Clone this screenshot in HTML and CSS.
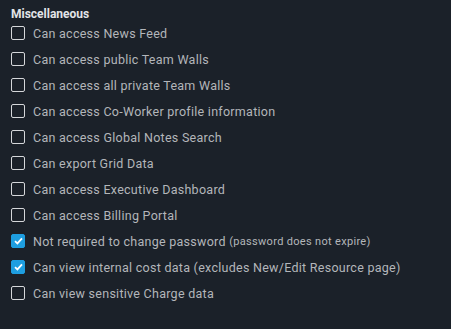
FILE: index.html
```html
<!DOCTYPE html>
<html>
<head>
	<meta charset="utf-8">
	<title>Permissions</title>
	<link rel="stylesheet" href="styles.css">
</head>
<body>
	<div class="section">
		<div class="title">Miscellaneous</div>
		<label class="row"><span class="box"></span>Can access News Feed</label>
		<label class="row"><span class="box"></span>Can access public Team Walls</label>
		<label class="row"><span class="box"></span>Can access all private Team Walls</label>
		<label class="row"><span class="box"></span>Can access Co-Worker profile information</label>
		<label class="row"><span class="box"></span>Can access Global Notes Search</label>
		<label class="row"><span class="box"></span>Can export Grid Data</label>
		<label class="row"><span class="box"></span>Can access Executive Dashboard</label>
		<label class="row"><span class="box"></span>Can access Billing Portal</label>
		<label class="row"><span class="box checked"><svg width="9" height="8" viewBox="0 0 9 8"><path d="M1 4.2 L3.4 6.4 L8 1.4" fill="none" stroke="#fff" stroke-width="1.8"/></svg></span>Not required to change password <span class="note">(password does not expire)</span></label>
		<label class="row"><span class="box checked"><svg width="9" height="8" viewBox="0 0 9 8"><path d="M1 4.2 L3.4 6.4 L8 1.4" fill="none" stroke="#fff" stroke-width="1.8"/></svg></span>Can view internal cost data (excludes New/Edit Resource page)</label>
		<label class="row"><span class="box"></span>Can view sensitive Charge data</label>
	</div>
</body>
</html>
```

FILE: styles.css
```css
html, body{
	margin: 0;
	background-color: #1b2129;
}
body{
	font-family: Roboto, "Liberation Sans", sans-serif;
	cursor: default;
}
.section{
	padding: 7px 11px 5px;
}
.title{
	color: #e2e4e7;
	font-size: 12px;
	font-weight: bold;
	line-height: 14px;
	margin-bottom: -1px;
}
.row{
	display: flex;
	align-items: center;
	height: 26px;
	color: #b3b6ba;
	font-size: 12.5px;
	letter-spacing: 0.27px;
	white-space: pre;
}
.box{
	box-sizing: border-box;
	width: 14px;
	height: 14px;
	border: 1px solid #d5d7da;
	border-radius: 2px;
	margin-right: 8px;
	display: flex;
	align-items: center;
	justify-content: center;
}
.box.checked{
	background-color: #1e9ee0;
	border-color: #1e9ee0;
}
.note{
	font-size: 11px;
	letter-spacing: 0.32px;
}
```
